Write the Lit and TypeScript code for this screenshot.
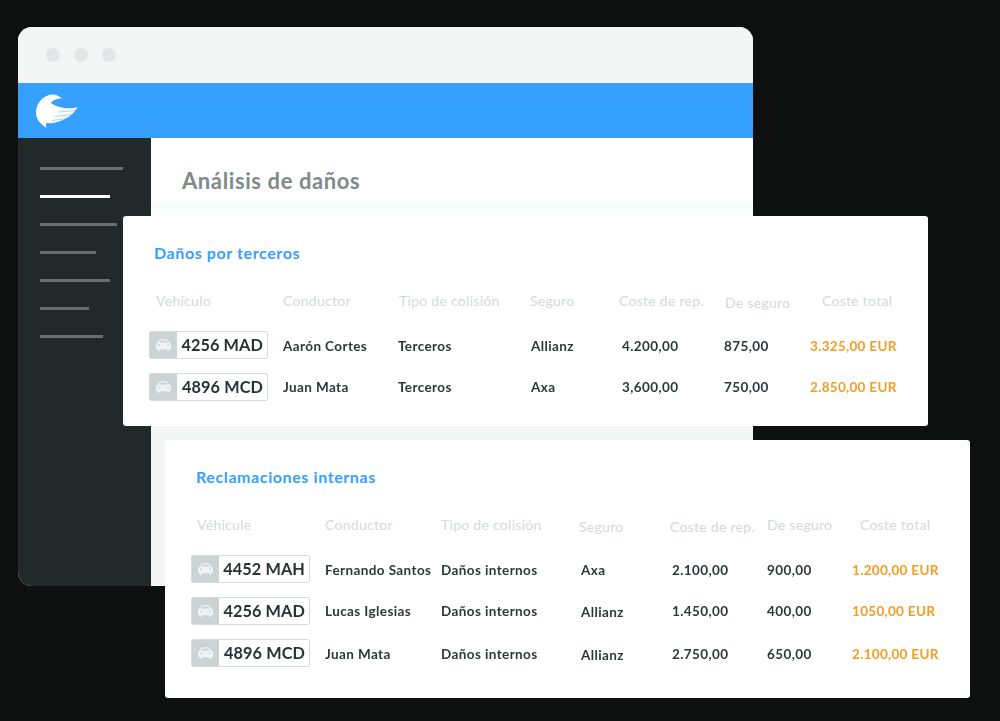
import { LitElement, html, css, svg } from "lit";
import { customElement } from "lit/decorators.js";

interface Row { plate: string; driver: string; type: string; ins: string; ro?: boolean; up?: boolean; rep: string; sec: string; total: string; }

const car = svg`<svg class="car" viewBox="0 0 18 14" width="15" height="12" aria-hidden="true">
  <path fill="#f1f3f3" d="M4.200.8C4.600.3 5 0 5.800 0h6.400c.8 0 1.200.3 1.600.8l2 3.200c1.200.4 2.200 1.300 2.200 2.800v4.400c0 .5-.3.8-.8.8H16v1c0 .6-.4 1-1 1h-1c-.6 0-1-.4-1-1v-1H5v1c0 .6-.4 1-1 1H3c-.6 0-1-.4-1-1v-1H.8c-.5 0-.8-.3-.8-.8V6.800C0 5.300 1 4.400 2.200 4z"/>
  <path fill="#ccd3d3" d="M5.300 1.600h7.400l1.500 2.500H3.800z"/>
  <circle cx="3.500" cy="7.300" r="1.100" fill="#ccd3d3"/><circle cx="14.500" cy="7.300" r="1.100" fill="#ccd3d3"/>
</svg>`;

const logo = html`<svg class="logo" viewBox="0 0 44 36" width="44" height="36" aria-hidden="true">
  <path fill="#fff" d="M27 5.500C24 3 21 1 16.500 1.500 8 2.500 1 10 1 20c0 7 5 11 10.700 15-.7-2-1.200-3.500-.2-5 4.500 1 12.500-.5 19.500-4.500 5-3 9-6.500 11.700-11.500-4.700 1.700-10.700 1.700-15.700.5-4.500-1-8.500-2.500-11-4.500C17 7.500 22 5.500 27 5.500z"/>
  <path fill="none" stroke="#36a0ff" stroke-width=".6" opacity=".75" d="M41 17.500 23 19M37 21.500 20 23.500M31.500 25.500 17 27.500"/>
</svg>`;

@customElement("app-root")
export class AppRoot extends LitElement {
  static styles = css`
    :host { display: block; height: 721px; background: #0e0f0f; font-family: "Lato", "Liberation Sans", sans-serif; overflow: hidden; }
    .stage { position: relative; height: 721px; padding: 27px 0 0 18px; box-sizing: border-box; filter: blur(0.35px); }
    .window { width: 735px; height: 559px; border-radius: 14px; overflow: hidden; display: flex; flex-direction: column; background: #fff; }
    .chrome { height: 56px; flex: none; background: #f4f5f5; display: flex; align-items: center; gap: 14px; padding: 0 0 0 28px; box-sizing: border-box; }
    .dot { width: 14px; height: 14px; border-radius: 50%; background: #e2e6e6; }
    .brand { height: 55px; flex: none; background: #36a0ff; display: flex; align-items: center; padding-left: 17px; box-sizing: border-box; }
    .main { flex: 1; display: flex; min-height: 0; }
    .side { width: 133px; flex: none; background: #212929; padding: 29px 0 0 21.500px; box-sizing: border-box; display: flex; flex-direction: column; gap: 25px; }
    .line { height: 3px; background: #666e6e; }
    .line.on { background: #fff; }
    .content { flex: 1; background: linear-gradient(#fff 60px, #fafbfb 70px, #f4f5f5 290px); padding: 29px 0 0 31px; box-sizing: border-box; }
    h1 { margin: 0; font-size: 22px; line-height: 28px; font-weight: 700; color: #7f8a8a; letter-spacing: 0.6px; }
    .card { position: absolute; width: 805px; background: #fff; border-radius: 3px; box-sizing: border-box; padding-top: 27px; }
    .c1 { left: 123px; top: 216px; height: 210px; }
    .c2 { left: 165px; top: 440px; height: 258px; }
    h2 { margin: 0 0 27px; font-size: 16px; line-height: 20px; font-weight: 700; color: #36a0ff; letter-spacing: 0.6px; padding-left: 31px; }
    .head, .row { display: grid; align-items: center; }
    .head { height: 20px; margin-bottom: 21px; font-size: 14px; color: #d3d9d9; letter-spacing: 0.28px; white-space: nowrap; }
    .low { padding-top: 4px; }
    .row { height: 28px; margin-bottom: 14px; font-size: 13.500px; font-weight: 700; color: #2f3839; letter-spacing: 0.4px; white-space: nowrap; padding-left: 26px; }
    .row > span { padding-top: 2px; }
    .row > span.low { padding-top: 4px; }
    .row.up > span { padding-top: 0; }
    .row.up > span.low { padding-top: 2px; }
    .c1 .head { padding-left: 33px; grid-template-columns: 127px 116px 131px 89px 106px 97px auto; }
    .c1 .row { grid-template-columns: 134px 115px 133px 91px 102px 86px auto; }
    .c2 .head { padding-left: 32px; grid-template-columns: 128px 116px 138px 91px 97px 93px auto; }
    .c2 .row { grid-template-columns: 134px 116px 140px 91px 95px 85px auto; }
    .total { color: #f59c24; letter-spacing: 0.3px; }
    .plate { width: 119px; height: 28px; box-sizing: border-box; border: 1.500px solid #d5dada; border-radius: 2px; display: flex; background: #fff; }
    .ico { width: 27px; flex: none; background: #ccd3d3; display: flex; align-items: center; justify-content: center; }
    .num { flex: 1; font-size: 16.300px; font-weight: 700; line-height: 26px; color: #2a3233; letter-spacing: 0.1px; text-align: right; padding-right: 4px; }
    .logo { display: block; }
  `;

  private table(title: string, cls: string, heads: string[], rows: Row[]) {
    return html`<section class="card ${cls}">
      <h2>${title}</h2>
      <div class="head">
        ${heads.map((h, i) => html`<span class=${(cls === "c1" && i === 5) || (cls === "c2" && (i === 3 || i === 4)) ? "low" : ""}>${h}</span>`)}
      </div>
      ${rows.map((r) => html`<div class="row ${r.up ? "up" : ""}">
        <div class="plate"><div class="ico">${car}</div><div class="num">${r.plate}</div></div>
        <span>${r.driver}</span><span>${r.type}</span>
        <span class=${r.ro ? "low" : ""}>${r.ins}</span>
        <span>${r.rep}</span><span>${r.sec}</span>
        <span class="total">${r.total}</span>
      </div>`)}
    </section>`;
  }

  render() {
    const widths = [83.5, 70, 77, 56, 70, 49, 63];
    return html`<div class="stage">
      <div class="window">
        <div class="chrome"><span class="dot"></span><span class="dot"></span><span class="dot"></span></div>
        <div class="brand">${logo}</div>
        <div class="main">
          <nav class="side">${widths.map((w, i) => html`<div class="line ${i === 1 ? "on" : ""}" style="width:${w}px"></div>`)}</nav>
          <div class="content"><h1>Análisis de daños</h1></div>
        </div>
      </div>
      ${this.table("Daños por terceros", "c1",
        ["Vehículo", "Conductor", "Tipo de colisión", "Seguro", "Coste de rep.", "De seguro", "Coste total"],
        [
          { plate: "4256 MAD", driver: "Aarón Cortes", type: "Terceros", ins: "Allianz", rep: "4.200,00", sec: "875,00", total: "3.325,00 EUR" },
          { plate: "4896 MCD", driver: "Juan Mata", type: "Terceros", ins: "Axa", up: true, rep: "3,600,00", sec: "750,00", total: "2.850,00 EUR" },
        ])}
      ${this.table("Reclamaciones internas", "c2",
        ["Véhicule", "Conductor", "Tipo de colisión", "Seguro", "Coste de rep.", "De seguro", "Coste total"],
        [
          { plate: "4452 MAH", driver: "Fernando Santos", type: "Daños internos", ins: "Axa", rep: "2.100,00", sec: "900,00", total: "1.200,00 EUR" },
          { plate: "4256 MAD", driver: "Lucas Iglesias", type: "Daños internos", ins: "Allianz", ro: true, up: true, rep: "1.450,00", sec: "400,00", total: "1050,00 EUR" },
          { plate: "4896 MCD", driver: "Juan Mata", type: "Daños internos", ins: "Allianz", ro: true, rep: "2.750,00", sec: "650,00", total: "2.100,00 EUR" },
        ])}
    </div>`;
  }
}
